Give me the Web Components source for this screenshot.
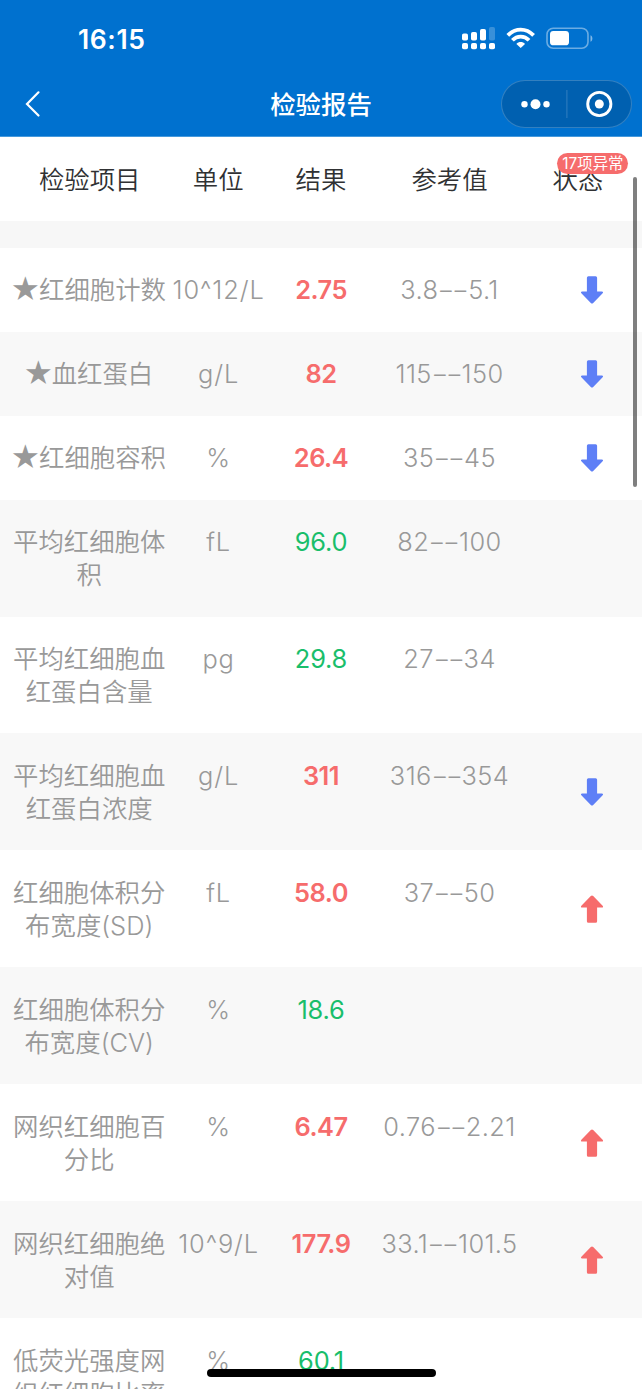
<!DOCTYPE html>
<html lang="zh-CN">
<head>
<meta charset="UTF-8">
<title>检验报告</title>
<style>
    html, body {
        margin: 0;
        height: 100%;
        overflow: hidden;
    }
    body {
        background: #fff;
        font-family: Inter, 'Noto Sans CJK SC', sans-serif;
    }
</style>
</head>
<body>
<report-screen>
    <status-bar slot="top" time="16:15"></status-bar>
    <nav-bar slot="top">检验报告</nav-bar>
    <report-table></report-table>
</report-screen>

<script>
const ROWS = [
    { name: '★红细胞计数', unit: '10^12/L', result: '2.75', range: '3.8--5.1', state: 'down' },
    { name: '★血红蛋白', unit: 'g/L', result: '82', range: '115--150', state: 'down' },
    { name: '★红细胞容积', unit: '%', result: '26.4', range: '35--45', state: 'down' },
    { name: '平均红细胞体积', unit: 'fL', result: '96.0', range: '82--100' },
    { name: '平均红细胞血红蛋白含量', unit: 'pg', result: '29.8', range: '27--34' },
    { name: '平均红细胞血红蛋白浓度', unit: 'g/L', result: '311', range: '316--354', state: 'down' },
    { name: '红细胞体积分布宽度(SD)', unit: 'fL', result: '58.0', range: '37--50', state: 'up' },
    { name: '红细胞体积分布宽度(CV)', unit: '%', result: '18.6', range: '' },
    { name: '网织红细胞百分比', unit: '%', result: '6.47', range: '0.76--2.21', state: 'up' },
    { name: '网织红细胞绝对值', unit: '10^9/L', result: '177.9', range: '33.1--101.5', state: 'up' },
    { name: '低荧光强度网织红细胞比率', unit: '%', result: '60.1', range: '' }
];

class ReportScreen extends HTMLElement {
    constructor() {
        super();
        this.attachShadow({ mode: 'open' });
        this.shadowRoot.innerHTML = `
            <style>
                :host {
                    display: flex;
                    flex-direction: column;
                    position: relative;
                    height: 1389px;
                    overflow: hidden;
                }

                header {
                    flex: none;
                    background: #0071cf;
                    border-bottom: 1px solid #4599dc;
                }

                main {
                    flex: 1;
                    min-height: 0;
                    overflow: hidden;
                }

                /* Overlays on top of the scrolled list */
                .scroll-thumb {
                    position: absolute;
                    top: 177px;
                    right: 5px;
                    width: 4px;
                    height: 310px;
                    border-radius: 2px;
                    background: rgba(0, 0, 0, 0.5);
                }

                .home-indicator {
                    position: absolute;
                    bottom: 12px;
                    left: 207px;
                    width: 229px;
                    height: 8px;
                    border-radius: 4px;
                    background: #000;
                }
            </style>
            <header><slot name="top"></slot></header>
            <main><slot></slot></main>
            <div class="scroll-thumb"></div>
            <div class="home-indicator"></div>
        `;
    }
}

class StatusBar extends HTMLElement {
    constructor() {
        super();
        this.attachShadow({ mode: 'open' });
    }

    connectedCallback() {
        this.shadowRoot.innerHTML = `
            <style>
                :host {
                    display: flex;
                    justify-content: space-between;
                    align-items: center;
                    height: 72px;
                    padding: 4px 47px 0 78px;
                    box-sizing: border-box;
                    color: #fff;
                }

                .time {
                    padding-top: 1px;
                    font-size: 26.5px;
                    font-weight: 600;
                    line-height: 34px;
                    letter-spacing: 0.6px;
                }

                svg { display: block; }
            </style>
            <span class="time">${this.getAttribute('time')}</span>
            <svg width="134" height="24" viewBox="0 0 134 24" fill="#fff">
                <rect x="1" y="7.5" width="6" height="7" rx="1.8"/>
                <rect x="10" y="6" width="6" height="8.5" rx="1.8"/>
                <rect x="19" y="3" width="6" height="11.5" rx="1.8"/>
                <rect x="28" y="1" width="6" height="13.5" rx="1.8" opacity="0.22"/>
                <rect x="1" y="17" width="6" height="6.3" rx="1.8"/>
                <rect x="10" y="17" width="6" height="6.3" rx="1.8"/>
                <rect x="19" y="17" width="6" height="6.3" rx="1.8"/>
                <rect x="28" y="17" width="6" height="6.3" rx="1.8"/>
                <g fill="none" stroke="#fff" stroke-width="3.8">
                    <path d="M46.8 9.4C54.2 1.6 65.2 1.6 72.6 9.4"/>
                    <path d="M51.4 14.3C56 9.4 63.4 9.4 68 14.3"/>
                </g>
                <path d="M59.7 22L55.4 17.9C57.7 15.4 61.7 15.4 64 17.9Z"/>
                <rect x="86" y="2.2" width="41" height="20" rx="6.2" fill="none" stroke="#fff" stroke-opacity="0.42" stroke-width="1.6"/>
                <rect x="89" y="5" width="19" height="14.3" rx="3.4"/>
                <path d="M129.5 9.2C132 10.2 132 14.8 129.5 15.8Z" opacity="0.5"/>
            </svg>
        `;
    }
}

class NavBar extends HTMLElement {
    constructor() {
        super();
        this.attachShadow({ mode: 'open' });
        this.shadowRoot.innerHTML = `
            <style>
                :host {
                    display: grid;
                    grid-template-columns: 1fr auto 1fr;
                    align-items: center;
                    height: 64px;
                    padding: 0 10px;
                    color: #fff;
                }

                .title {
                    padding-top: 2px;
                    font-size: 25.4px;
                    font-weight: 500;
                    line-height: 34px;
                }

                svg { display: block; }

                .back {
                    justify-self: start;
                    margin-left: 12px;
                }

                .capsule {
                    justify-self: end;
                    box-sizing: border-box;
                    width: 131px;
                    height: 48px;
                    border: 1px solid rgba(255, 255, 255, 0.2);
                    border-radius: 24px;
                    background: rgba(0, 0, 0, 0.15);
                }
            </style>
            <svg class="back" width="22" height="28" viewBox="0 0 22 28" fill="none" stroke="#fff" stroke-width="2.2" stroke-linecap="round">
                <path d="M16.5 2.3L5 14L16.5 25.5"/>
            </svg>
            <span class="title"><slot></slot></span>
            <div class="capsule">
                <svg width="129" height="46" viewBox="0 0 129 46" fill="#fff">
                    <circle cx="22.5" cy="23.2" r="3.2"/>
                    <circle cx="33.5" cy="23.2" r="5"/>
                    <circle cx="44.5" cy="23.2" r="3.2"/>
                    <rect x="64.4" y="9" width="1" height="28" opacity="0.2"/>
                    <circle cx="97.3" cy="23" r="11.6" fill="none" stroke="#fff" stroke-width="2.9"/>
                    <circle cx="97.3" cy="23" r="4.5"/>
                </svg>
            </div>
        `;
    }
}

class StateArrow extends HTMLElement {
    constructor() {
        super();
        this.attachShadow({ mode: 'open' });
    }

    connectedCallback() {
        this.shadowRoot.innerHTML = `
            <style>
                :host {
                    display: block;
                    color: #5e7ff6;
                }
                :host([direction="up"]) { color: #f66c6c; }
                :host([direction="up"]) svg { transform: rotate(180deg); }
                svg { display: block; }
            </style>
            <svg width="24" height="28" viewBox="0 0 24 28" fill="currentColor">
                <path d="M8.4 0.3H15.6Q17.1 0.3 17.1 1.8V15.4H21.8Q24 15.6 22.4 17.5L13.2 26.9Q12 28 10.8 26.9L1.6 17.5Q0 15.6 2.2 15.4H6.9V1.8Q6.9 0.3 8.4 0.3Z"/>
            </svg>
        `;
    }
}

class CountBadge extends HTMLElement {
    constructor() {
        super();
        this.attachShadow({ mode: 'open' });
        this.shadowRoot.innerHTML = `
            <style>
                :host {
                    display: block;
                    box-sizing: border-box;
                    width: 71px;
                    height: 21px;
                    border-radius: 10.5px;
                    background: #f66c6c;
                    color: #fff;
                    font-size: 15.4px;
                    font-weight: 400;
                    line-height: 21px;
                    text-align: center;
                    white-space: nowrap;
                }
            </style>
            <slot></slot>
        `;
    }
}

class ReportRow extends HTMLElement {
    constructor() {
        super();
        this.attachShadow({ mode: 'open' });
    }

    set data(row) {
        const arrow = row.state ? `<state-arrow direction="${row.state}"></state-arrow>` : '';
        const abnormal = row.state ? 'abnormal' : '';
        const name = row.name.replace('★', '<b>★</b>');
        const range = row.range.replace('--', '<i>--</i>');
        this.shadowRoot.innerHTML = `
            <style>
                :host {
                    display: grid;
                    grid-template-columns: 3fr 2fr 2fr 3fr 2fr;
                    padding: 25.7px 12.6px 25.28px;
                    color: #999;
                    font-size: 25.4px;
                    font-weight: 300;
                    line-height: 33px;
                    text-align: center;
                }

                span { white-space: nowrap; }

                .name {
                    margin: 0 0.5px 0 -0.5px;
                    font-weight: 350;
                    white-space: normal;
                    word-break: break-all;
                }

                b {
                    display: inline-block;
                    font-weight: inherit;
                    transform: scale(1.14);
                }

                .unit { letter-spacing: 0.9px; margin-right: -0.9px; }
                .result { color: #19be6b; font-weight: 400; letter-spacing: -0.2px; }
                .result.abnormal { color: #f66c6c; font-weight: 600; letter-spacing: -0.5px; }
                .range { letter-spacing: 0.4px; }

                /* Long dashes between the two limits */
                i {
                    display: inline-block;
                    margin: 0 6.5px 0 3.9px;
                    font-style: normal;
                    letter-spacing: -1.8px;
                    transform: scaleX(1.5);
                }

                .state {
                    display: flex;
                    align-items: center;
                    justify-content: center;
                    padding: 0.6px 0 0 28px;
                }
            </style>
            <span class="name">${name}</span>
            <span class="unit">${row.unit}</span>
            <span class="result ${abnormal}">${row.result}</span>
            <span class="range">${range}</span>
            <div class="state">${arrow}</div>
        `;
    }
}

class ReportTable extends HTMLElement {
    constructor() {
        super();
        this.attachShadow({ mode: 'open' });
    }

    connectedCallback() {
        this.shadowRoot.innerHTML = `
            <style>
                :host { display: block; }

                .head {
                    display: grid;
                    grid-template-columns: 3fr 2fr 2fr 3fr 2fr;
                    padding: 25.5px 12.6px;
                    color: #303133;
                    font-size: 25.4px;
                    font-weight: 350;
                    line-height: 33px;
                    text-align: center;
                }

                .status { position: relative; }

                count-badge {
                    position: absolute;
                    top: -10px;
                    right: 1px;
                }

                /* Tail of the row hidden under the sticky head */
                .tail {
                    height: 26.7px;
                    background: #f7f7f7;
                }

                report-row:nth-child(even) { background: #f8f8f8; }
            </style>
            <div class="head">
                <span>检验项目</span>
                <span>单位</span>
                <span>结果</span>
                <span>参考值</span>
                <span class="status">状态<count-badge>17项异常</count-badge></span>
            </div>
            <div class="tail"></div>
            <div class="rows"></div>
        `;
        const rows = this.shadowRoot.querySelector('.rows');
        ROWS.forEach(data => {
            const row = document.createElement('report-row');
            row.data = data;
            rows.appendChild(row);
        });
    }
}

customElements.define('state-arrow', StateArrow);
customElements.define('count-badge', CountBadge);
customElements.define('report-row', ReportRow);
customElements.define('report-table', ReportTable);
customElements.define('status-bar', StatusBar);
customElements.define('nav-bar', NavBar);
customElements.define('report-screen', ReportScreen);
</script>
</body>
</html>
